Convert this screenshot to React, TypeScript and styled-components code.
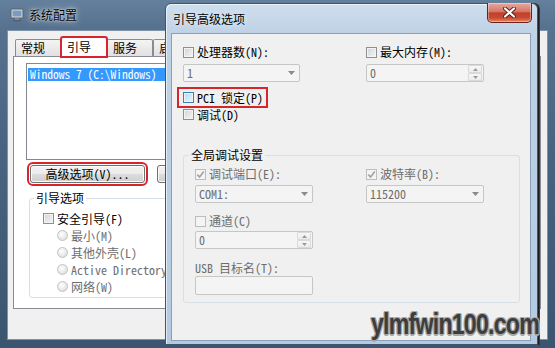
import React from 'react'
import styled, { createGlobalStyle } from 'styled-components'

const UI_FONT = `"Noto Sans Mono CJK SC", "Noto Sans CJK SC", "Liberation Mono", monospace`
const SANS = `"Noto Sans CJK SC", "Liberation Sans", sans-serif`
const RED = '#d7262b'
const GRAY_TEXT = '#6d6d6d'

const GlobalStyle = createGlobalStyle`
  * { box-sizing: border-box; }
  html, body { margin: 0; padding: 0; }
  body { width: 555px; height: 348px; overflow: hidden; background: #2f4863; }
`

const Desktop = styled.div`
  position: relative;
  width: 555px;
  height: 348px;
  overflow: hidden;
  font-family: ${UI_FONT};
  font-size: 12px;
  line-height: 14px;
  color: #000;
`

/* ---------- back window: 系统配置 ---------- */

const BackWindow = styled.div`
  position: absolute;
  left: 0;
  top: 0;
  width: 555px;
  height: 348px;
  display: flex;
  flex-direction: column;
  padding: 0 7px 8px 7px;
  background: linear-gradient(180deg, #63809d 0%, #57728e 28px, #48637f 45%, #3b5570 100%);
`

const BackTitleBar = styled.div`
  height: 30px;
  flex: none;
  display: flex;
  align-items: center;
  gap: 5px;
  padding-left: 3px;
  font-family: ${SANS};
  font-size: 12px;
  text-shadow: 0 0 6px rgba(255, 255, 255, 0.9), 0 0 2px rgba(255, 255, 255, 0.8);
`

const BackBody = styled.div`
  flex: 1;
  display: flex;
  flex-direction: column;
  background: #f0f0f0;
  border: 1px solid #7f93a8;
  padding: 6px 6px 0 5px;
`

const TabStrip = styled.div`
  height: 19px;
  flex: none;
  display: flex;
  align-items: flex-end;
  padding-left: 2px;
`

const Tab = styled.div<{ $active?: boolean }>`
  position: relative;
  z-index: ${(p) => (p.$active ? 2 : 0)};
  height: ${(p) => (p.$active ? 20 : 17)}px;
  margin-bottom: ${(p) => (p.$active ? -1 : 0)}px;
  padding: ${(p) => (p.$active ? 2 : 1)}px 15px 0 5px;
  border: 1px solid #898c95;
  border-bottom: none;
  border-radius: 2px 2px 0 0;
  background: ${(p) => (p.$active ? '#fff' : 'linear-gradient(180deg, #f4f4f4, #e1e1e1)')};
  font-family: ${SANS};
  font-size: 12px;
  line-height: 14px;
  white-space: nowrap;
  ${(p) => p.$active && `outline: 2px solid ${RED}; outline-offset: -1px;`}
`

const TabPanel = styled.div`
  height: 253px;
  flex: none;
  border: 1px solid #898c95;
  background: #fff;
  padding: 6px 0 0 12px;
`

const ListBox = styled.div`
  width: 480px;
  height: 97px;
  border: 1px solid #828790;
  background: #fff;
  padding: 4px 1px;
`

const ListItem = styled.div`
  height: 13px;
  line-height: 13px;
  padding-left: 2px;
  background: #3399ff;
  color: #fff;
  font-size: 11.5px;
  white-space: nowrap;
`

const ButtonRow = styled.div`
  display: flex;
  gap: 12px;
  margin-top: 5px;
  padding-left: 4px;
`

const PushButton = styled.div<{ $marked?: boolean }>`
  width: 115px;
  height: 18px;
  border: 1px solid #707070;
  border-radius: 3px;
  background: linear-gradient(180deg, #f2f2f2 0%, #ebebeb 50%, #dddddd 50%, #cfcfcf 100%);
  box-shadow: inset 0 0 0 1px #fbfbfb;
  text-align: center;
  line-height: 16px;
  white-space: nowrap;
  ${(p) => p.$marked && `outline: 2px solid ${RED}; outline-offset: 1px;`}
`

const GroupBox = styled.div<{ $bg: string }>`
  position: relative;
  border: 1px solid #d5dfe5;
  border-radius: 3px;
  --group-bg: ${(p) => p.$bg};
`

const GroupTitle = styled.span<{ $left: number }>`
  position: absolute;
  top: -8px;
  left: ${(p) => p.$left}px;
  padding: 0 2px;
  background: var(--group-bg);
  font-family: ${SANS};
  font-size: 12px;
  line-height: 14px;
  white-space: nowrap;
`

const BootGroup = styled(GroupBox)`
  width: 500px;
  height: 100px;
  margin: 15px 0 0 3px;
  padding: 11px 0 2px 13px;
`

const OptionRow = styled.div<{ $indent?: number; $disabled?: boolean }>`
  height: 17px;
  display: flex;
  align-items: center;
  gap: 3px;
  padding-left: ${(p) => p.$indent ?? 0}px;
  color: ${(p) => (p.$disabled ? GRAY_TEXT : '#000')};
  white-space: nowrap;
`

/* ---------- controls ---------- */

type BoxState = 'normal' | 'hot' | 'disabled'

const boxBorder = { normal: '#8e8f8f', hot: '#3c7fb1', disabled: '#bdbdbd' }
const boxFill = {
  normal: 'linear-gradient(135deg, #cfd2d6 0%, #f7f7f7 100%)',
  hot: 'linear-gradient(135deg, #b1d8f5 0%, #e9f6fd 100%)',
  disabled: '#f4f4f4',
}

const CheckSquare = styled.span<{ $state: BoxState }>`
  flex: none;
  width: 11px;
  height: 11px;
  display: inline-flex;
  align-items: center;
  justify-content: center;
  border: 1px solid ${(p) => boxBorder[p.$state]};
  background: ${(p) => boxFill[p.$state]};
  box-shadow: inset 0 0 0 1px ${(p) => (p.$state === 'disabled' ? '#f4f4f4' : '#f3f3f3')};
`

const RadioDot = styled.span`
  flex: none;
  width: 11px;
  height: 11px;
  border-radius: 50%;
  border: 1px solid #c2c2c2;
  background: radial-gradient(circle at 40% 35%, #ffffff 0%, #e9e9e9 55%, #d6d6d6 100%);
`

const CheckBox = ({ state = 'normal', checked }: { state?: BoxState; checked?: boolean }) => (
  <CheckSquare $state={state}>
    {checked && (
      <svg width="9" height="9" viewBox="0 0 9 9">
        <path d="M1.3 4.6 L3.6 7 L7.8 1.6" fill="none" stroke="#a3a3a3" strokeWidth="1.6" />
      </svg>
    )}
  </CheckSquare>
)

const FieldRow = styled.div<{ $disabled?: boolean; $mt?: number }>`
  height: 14px;
  display: flex;
  align-items: center;
  gap: 3px;
  margin-top: ${(p) => p.$mt ?? 0}px;
  color: ${(p) => (p.$disabled ? GRAY_TEXT : '#000')};
  white-space: nowrap;
`

const Highlight = styled.div`
  width: fit-content;
  height: 21px;
  display: flex;
  align-items: center;
  gap: 3px;
  margin: 5px 0 -2px -6px;
  padding: 0 3px 0 4px;
  border: 2px solid ${RED};
  white-space: nowrap;
`

const Field = styled.div<{ $w: number; $h?: number; $mt?: number }>`
  width: ${(p) => p.$w}px;
  height: ${(p) => p.$h ?? 18}px;
  margin-top: ${(p) => p.$mt ?? 0}px;
  display: flex;
  align-items: center;
  border: 1px solid #c6c6c6;
  border-radius: 2px;
  background: #f4f4f4;
  color: ${GRAY_TEXT};
  white-space: nowrap;
`

const FieldText = styled.span`
  flex: 1;
  padding-left: 3px;
`

const ComboArrow = styled.svg`
  flex: none;
  margin-right: 4px;
`

const SpinButtons = styled.div`
  flex: none;
  width: 14px;
  height: 16px;
  margin-right: 1px;
  display: flex;
  flex-direction: column;
  gap: 0;
`

const SpinButton = styled.div`
  flex: 1;
  display: flex;
  align-items: center;
  justify-content: center;
  border: 1px solid #d9d9d9;
  border-radius: 1px;
  background: linear-gradient(180deg, #f7f7f7, #ececec);
`

const Combo = ({ w, value, mt }: { w: number; value: string; mt?: number }) => (
  <Field $w={w} $mt={mt}>
    <FieldText>{value}</FieldText>
    <ComboArrow width="7" height="4" viewBox="0 0 7 4">
      <path d="M0 0 H7 L3.5 4 Z" fill="#8a8a8a" />
    </ComboArrow>
  </Field>
)

const Spin = ({ w, value, mt }: { w: number; value: string; mt?: number }) => (
  <Field $w={w} $mt={mt}>
    <FieldText>{value}</FieldText>
    <SpinButtons>
      <SpinButton>
        <svg width="5" height="3" viewBox="0 0 5 3">
          <path d="M0 3 H5 L2.5 0 Z" fill="#9a9a9a" />
        </svg>
      </SpinButton>
      <SpinButton>
        <svg width="5" height="3" viewBox="0 0 5 3">
          <path d="M0 0 H5 L2.5 3 Z" fill="#9a9a9a" />
        </svg>
      </SpinButton>
    </SpinButtons>
  </Field>
)

/* ---------- front window: 引导高级选项 ---------- */

const FrontWindow = styled.div`
  position: absolute;
  left: 165px;
  top: 3px;
  width: 373px;
  height: 342px;
  display: flex;
  flex-direction: column;
  padding: 0 6px 3px 5px;
  border: 1px solid #3f566e;
  border-radius: 6px 6px 0 0;
  background: linear-gradient(180deg, #cddeee 0%, #bfd2e6 29px, #b8cee4 60%, #b3cae2 100%);
  box-shadow: inset 1px 1px 0 rgba(255, 255, 255, 0.6), 1px 0 0 #1d1d1d, 2px 0 0 #3a3a3a;
`

const FrontTitleBar = styled.div`
  height: 29px;
  flex: none;
  display: flex;
  align-items: flex-start;
  margin-right: -1px;
`

const FrontTitle = styled.span`
  padding: 8px 0 0 2px;
  font-family: ${SANS};
  font-size: 12px;
  line-height: 14px;
  text-shadow: 0 0 6px rgba(255, 255, 255, 0.9);
`

const CloseButton = styled.div`
  margin-left: auto;
  margin-top: -1px;
  width: 45px;
  height: 20px;
  display: flex;
  align-items: center;
  justify-content: center;
  border: 1px solid #6b2219;
  border-top: none;
  border-radius: 0 0 5px 5px;
  background: linear-gradient(180deg, #e8a99d 0%, #d47767 45%, #c2402b 52%, #c84a33 78%, #e3876c 100%);
  box-shadow: inset 0 0 0 1px rgba(255, 255, 255, 0.35);
`

const DialogBody = styled.div`
  flex: 1;
  background: #f0f0f0;
  border: 1px solid #8aa0b6;
  padding: 11px 10px 0 11px;
`

const TwoColumns = styled.div<{ $first: number }>`
  display: grid;
  grid-template-columns: ${(p) => p.$first}px 1fr;
  align-items: start;
`

const Column = styled.div`
  display: flex;
  flex-direction: column;
`

const DebugGroup = styled(GroupBox)`
  margin-top: 32px;
  height: 148px;
  padding: 11px 0 7px 11px;
`

const Watermark = styled.div`
  position: absolute;
  left: 371px;
  top: 310px;
  font-family: "Liberation Sans", Arial, sans-serif;
  font-weight: 700;
  font-size: 29px;
  line-height: 29px;
  letter-spacing: -1px;
  color: #3d3d3d;
  white-space: nowrap;
  transform: scaleX(0.8);
  transform-origin: left top;
  text-shadow: 1.5px 0 0 #a8a8a8, -1.5px 0 0 #a8a8a8, 0 1.5px 0 #a8a8a8, 0 -1.5px 0 #a8a8a8,
    1px 1px 0 #a8a8a8, -1px -1px 0 #a8a8a8, 1px -1px 0 #a8a8a8, -1px 1px 0 #a8a8a8,
    0 0 4px rgba(255, 255, 255, 0.9);
`

const AppIcon = () => (
  <svg width="14" height="14" viewBox="0 0 14 14">
    <rect x="1" y="1" width="12" height="9" rx="1" fill="#d9dee4" stroke="#56606b" />
    <rect x="2.5" y="2.5" width="9" height="6" fill="#7c9cbf" />
    <rect x="5" y="10" width="4" height="2" fill="#7d8792" />
    <rect x="3" y="12" width="8" height="1.5" fill="#56606b" />
  </svg>
)

export default function App() {
  return (
    <>
      <GlobalStyle />
      <Desktop>
        <BackWindow>
          <BackTitleBar>
            <AppIcon />
            <span>系统配置</span>
          </BackTitleBar>
          <BackBody>
            <TabStrip>
              <Tab>常规</Tab>
              <Tab $active>引导</Tab>
              <Tab>服务</Tab>
              <Tab>启动</Tab>
              <Tab>工具</Tab>
            </TabStrip>
            <TabPanel>
              <ListBox>
                <ListItem>Windows 7 (C:\Windows)</ListItem>
              </ListBox>
              <ButtonRow>
                <PushButton $marked>高级选项(V)...</PushButton>
                <PushButton>设为默认值(D)</PushButton>
              </ButtonRow>
              <BootGroup $bg="#fff">
                <GroupTitle $left={4}>引导选项</GroupTitle>
                <OptionRow>
                  <CheckBox />
                  <span>安全引导(F)</span>
                </OptionRow>
                <OptionRow $indent={14} $disabled>
                  <RadioDot />
                  <span>最小(M)</span>
                </OptionRow>
                <OptionRow $indent={14} $disabled>
                  <RadioDot />
                  <span>其他外壳(L)</span>
                </OptionRow>
                <OptionRow $indent={14} $disabled>
                  <RadioDot />
                  <span>Active Directory 修复(P)</span>
                </OptionRow>
                <OptionRow $indent={14} $disabled>
                  <RadioDot />
                  <span>网络(W)</span>
                </OptionRow>
              </BootGroup>
            </TabPanel>
          </BackBody>
        </BackWindow>

        <FrontWindow>
          <FrontTitleBar>
            <FrontTitle>引导高级选项</FrontTitle>
            <CloseButton>
              <svg width="13" height="11" viewBox="0 0 13 11">
                <path d="M2 1.5 L11 9.5 M11 1.5 L2 9.5" stroke="#5a1a12" strokeWidth="4" strokeLinecap="round" />
                <path d="M2 1.5 L11 9.5 M11 1.5 L2 9.5" stroke="#fff" strokeWidth="2.2" strokeLinecap="round" />
              </svg>
            </CloseButton>
          </FrontTitleBar>
          <DialogBody>
            <TwoColumns $first={183}>
              <Column>
                <FieldRow>
                  <CheckBox />
                  <span>处理器数(N):</span>
                </FieldRow>
                <Combo w={117} value="1" mt={5} />
                <Highlight>
                  <CheckBox state="hot" />
                  <span>PCI 锁定(P)</span>
                </Highlight>
                <OptionRow>
                  <CheckBox />
                  <span>调试(D)</span>
                </OptionRow>
              </Column>
              <Column>
                <FieldRow>
                  <CheckBox />
                  <span>最大内存(M):</span>
                </FieldRow>
                <Spin w={118} value="0" mt={5} />
              </Column>
            </TwoColumns>

            <DebugGroup $bg="#f0f0f0">
              <GroupTitle $left={5}>全局调试设置</GroupTitle>
              <TwoColumns $first={171}>
                <Column>
                  <FieldRow $disabled>
                    <CheckBox state="disabled" checked />
                    <span>调试端口(E):</span>
                  </FieldRow>
                  <Combo w={118} value="COM1:" mt={4} />
                  <FieldRow $disabled $mt={11}>
                    <CheckBox state="disabled" />
                    <span>通道(C)</span>
                  </FieldRow>
                  <Spin w={118} value="0" mt={3} />
                  <FieldRow $disabled $mt={12}>
                    <span>USB 目标名(T):</span>
                  </FieldRow>
                  <Field $w={118} $h={19} $mt={1} />
                </Column>
                <Column>
                  <FieldRow $disabled>
                    <CheckBox state="disabled" checked />
                    <span>波特率(B):</span>
                  </FieldRow>
                  <Combo w={118} value="115200" mt={4} />
                </Column>
              </TwoColumns>
            </DebugGroup>
          </DialogBody>
        </FrontWindow>

        <Watermark>ylmfwin100.com</Watermark>
      </Desktop>
    </>
  )
}
